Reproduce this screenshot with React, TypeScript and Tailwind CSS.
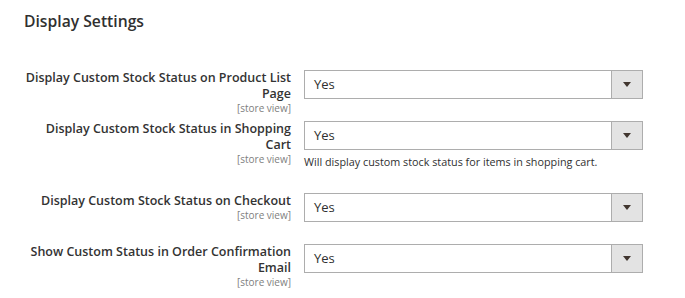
import { ReactNode } from "react";

const rows = [
  { label: ["Display Custom Stock Status on Product List", "Page"], mt: "mt-[38px]" },
  {
    label: ["Display Custom Stock Status in Shopping", "Cart"],
    note: "Will display custom stock status for items in shopping cart.",
    mt: "mt-[7px]",
  },
  { label: ["Display Custom Stock Status on Checkout"], mt: "mt-[24px]" },
  { label: ["Show Custom Status in Order Confirmation", "Email"], mt: "mt-[22px]" },
];

const Select = () => (
  <div className="flex h-[29px] w-[339px] border border-[#adadad] bg-white">
    <div className="flex flex-1 items-center pl-[9px] text-[13px] text-[#303030]">Yes</div>
    <div className="flex w-[31px] items-center justify-center border-l border-[#adadad] bg-[#e3e3e3]">
      <svg width="8" height="5" viewBox="0 0 8 5">
        <path d="M0 0h8L4 5z" fill="#41362f" />
      </svg>
    </div>
  </div>
);

const Row = ({ label, note, mt }: { label: string[]; note?: string; mt: string }): ReactNode => (
  <div className={`flex ${mt}`}>
    <div className="w-[291px] text-right">
      <div className="whitespace-nowrap text-[12.5px] font-semibold leading-[16px] text-[#333333]">
        {label.map((l) => (
          <div key={l}>{l}</div>
        ))}
      </div>
      <div className="text-[10px] leading-[12px] text-[#808080]">[store view]</div>
    </div>
    <div className="ml-[13px]">
      <Select />
      {note && (
        <p className="mt-[5px] text-[10.8px] leading-[14px] text-[#303030]">{note}</p>
      )}
    </div>
  </div>
);

export default function App() {
  return (
    <div
      className="h-[298px] w-[685px] overflow-hidden bg-white"
      style={{ fontFamily: '"Open Sans", sans-serif' }}
    >
      <h2 className="pl-[24px] pt-[10px] text-[15.7px] font-semibold leading-[22px] text-[#303030]">
        Display Settings
      </h2>
      {rows.map((r) => (
        <Row key={r.label[0]} label={r.label} note={r.note} mt={r.mt} />
      ))}
    </div>
  );
}
